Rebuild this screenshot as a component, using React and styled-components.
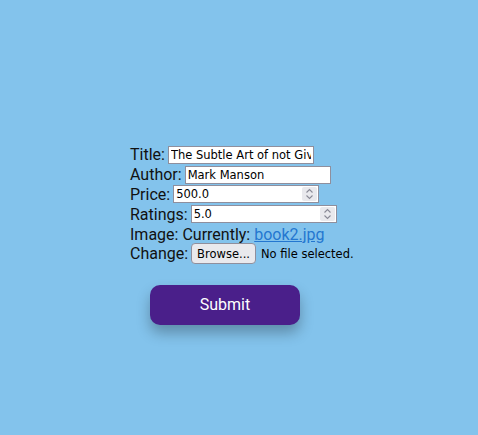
import React from "react";
import styled, { createGlobalStyle } from "styled-components";

const GlobalStyle = createGlobalStyle`
  html, body {
    margin: 0;
    padding: 0;
    background: #83c3ec;
  }
`;

const Page = styled.div`
  width: 478px;
  height: 435px;
  box-sizing: border-box;
  padding: 145px 0 0 130px;
  font-family: Roboto, "Liberation Sans", sans-serif;
  font-size: 16px;
  color: #111;
`;

const Form = styled.form`
  display: flex;
  flex-direction: column;
`;

const Row = styled.div`
  display: flex;
  align-items: center;
  height: 19.8px;
  white-space: nowrap;
`;

const Label = styled.label`
  margin-right: 3px;
`;

const Field = styled.input`
  box-sizing: border-box;
  width: ${(p) => p.$width || 146}px;
  height: 18px;
  padding: 1px 2px;
  border: 1px solid #8f8f9d;
  border-radius: 0;
  background: #fff;
  font-family: "DejaVu Sans", sans-serif;
  font-size: 11.5px;
  color: #000;
  outline: none;
`;

const NumberBox = styled.div`
  box-sizing: border-box;
  width: 146px;
  height: 18px;
  display: flex;
  align-items: stretch;
  border: 1px solid #8f8f9d;
  background: #fff;
`;

const NumberField = styled.input`
  flex: 1;
  min-width: 0;
  border: none;
  padding: 0 2px;
  background: transparent;
  font-family: "DejaVu Sans", sans-serif;
  font-size: 11.5px;
  color: #000;
  outline: none;
`;

const Spinner = styled.div`
  width: 15px;
  margin: 1px 1px 1px 0;
  background: #e9e9ed;
  border-radius: 2px;
  display: flex;
  align-items: center;
  justify-content: center;
`;

const Link = styled.a`
  margin-left: 4px;
  color: #2377d0;
  text-decoration: underline;
`;

const BrowseButton = styled.label`
  box-sizing: border-box;
  height: 21px;
  padding: 0 5px;
  display: flex;
  align-items: center;
  border: 1px solid #8f8f9d;
  border-radius: 4px;
  background: #e9e9ed;
  font-family: "DejaVu Sans", sans-serif;
  font-size: 11.5px;
  color: #000;
`;

const FileNote = styled.span`
  margin-left: 5px;
  font-family: "DejaVu Sans", sans-serif;
  font-size: 11.5px;
  color: #000;
`;

const HiddenFile = styled.input`
  display: none;
`;

const Submit = styled.button`
  margin: 21px 0 0 20px;
  width: 150px;
  height: 40px;
  border: none;
  border-radius: 10px;
  background: #4a1f8a;
  color: #fff;
  font-family: Roboto, "Liberation Sans", sans-serif;
  font-size: 16px;
  box-shadow: 0 8px 14px rgba(0, 0, 0, 0.28);
  cursor: pointer;
`;

function SpinIcon() {
  return (
    <svg width="9" height="12" viewBox="0 0 9 12" fill="none" stroke="#8a8a96" strokeWidth="1.1">
      <path d="M1.5 4.5 L4.5 1.5 L7.5 4.5" />
      <path d="M1.5 7.5 L4.5 10.5 L7.5 7.5" />
    </svg>
  );
}

function NumberInput({ value }) {
  return (
    <NumberBox>
      <NumberField type="text" defaultValue={value} />
      <Spinner>
        <SpinIcon />
      </Spinner>
    </NumberBox>
  );
}

export default function App() {
  return (
    <>
      <GlobalStyle />
      <Page>
        <Form onSubmit={(e) => e.preventDefault()}>
          <Row>
            <Label>Title:</Label>
            <Field defaultValue="The Subtle Art of not Giving a F*ck" />
          </Row>
          <Row>
            <Label>Author:</Label>
            <Field defaultValue="Mark Manson" />
          </Row>
          <Row>
            <Label>Price:</Label>
            <NumberInput value="500.0" />
          </Row>
          <Row>
            <Label>Ratings:</Label>
            <NumberInput value="5.0" />
          </Row>
          <Row>
            Image: Currently:<Link href="#">book2.jpg</Link>
          </Row>
          <Row>
            <Label>Change:</Label>
            <BrowseButton>
              Browse...
              <HiddenFile type="file" />
            </BrowseButton>
            <FileNote>No file selected.</FileNote>
          </Row>
          <div>
            <Submit type="submit">Submit</Submit>
          </div>
        </Form>
      </Page>
    </>
  );
}
